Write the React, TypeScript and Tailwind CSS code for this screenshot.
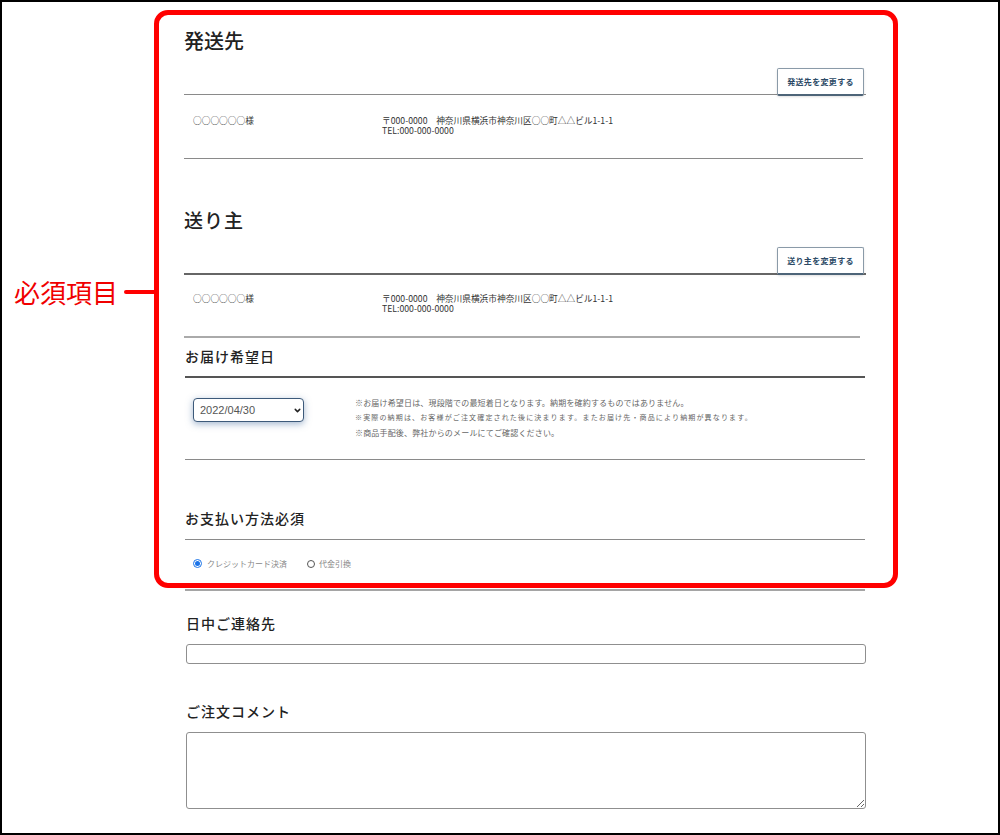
import React from 'react';
import { ChevronDown } from 'lucide-react';

const jp = 'font-["Noto_Sans_CJK_JP","Noto_Sans",sans-serif]';

function AddressRow({ spacing }: { spacing: string }) {
  return (
    <div className={`flex pl-[9px] text-[8.7px] leading-[10px] text-[#333] ${spacing}`}>
      <p className="w-[189px]">○○○○○○様</p>
      <p>
        〒000-0000　神奈川県横浜市神奈川区○○町△△ビル1-1-1
        <br />
        TEL:000-000-0000
      </p>
    </div>
  );
}

function ChangeButton({ label }: { label: string }) {
  return (
    <button className="absolute right-[2px] top-[-1px] z-10 block w-[87px] h-[28px] bg-white border border-[#8a9aa8] border-b-2 border-b-[#4d6478] rounded-[2px] text-[8px] font-bold tracking-[0.04em] text-[#2c4a66] shadow-sm">
      {label}
    </button>
  );
}

export default function App() {
  return (
    <div className={`relative h-[835px] w-[1000px] overflow-hidden bg-white border-2 border-black ${jp}`}>
      {/* Order form */}
      <div className="ml-[182px] w-[682px]">
        {/* 発送先 */}
        <section>
          <h2 className="pt-[25px] h-[67px] text-[20px] leading-[28px] font-medium text-[#222]">発送先</h2>
          <div className="relative h-[26px] border-b border-[#8a8a8a]">
            <ChangeButton label="発送先を変更する" />
          </div>
          <div className="border-b border-[#8a8a8a] w-[679px]">
            <AddressRow spacing="h-[63px] pt-[21px]" />
          </div>
        </section>

        {/* 送り主 */}
        <section>
          <h2 className="pt-[47px] h-[89px] text-[19px] leading-[28px] font-medium tracking-[0.05em] text-[#222]">送り主</h2>
          <div className="relative h-[27px] border-b-2 border-[#666]">
            <ChangeButton label="送り主を変更する" />
          </div>
          <div className="border-b-2 border-[#aaa] w-[676px]">
            <AddressRow spacing="h-[61px] pt-[19px]" />
          </div>
        </section>

        {/* お届け希望日 */}
        <section className="ml-[1px] w-[680px]">
          <h3 className="h-[40px] pt-[7px] text-[14px] leading-[22px] font-medium tracking-[1px] text-[#222] border-b-2 border-[#555]">
            お届け希望日
          </h3>
          <div className="flex h-[82px] border-b border-[#8a8a8a]">
            <div className="w-[170px] pl-[8px] pt-[20px]">
              <div className="relative w-[111px]">
                <select
                  defaultValue="2022/04/30"
                  className="block w-full h-[24px] pl-[6px] appearance-none bg-white border border-[#3d5a7a] rounded-[4px] text-[11px] text-[#555] font-['Liberation_Sans',sans-serif] shadow-[0_2px_7px_rgba(70,110,160,0.5)]"
                >
                  <option>2022/04/30</option>
                </select>
                <ChevronDown className="absolute right-[2px] top-[8px] w-[9px] h-[9px] text-[#222]" strokeWidth={4} />
              </div>
            </div>
            <div className="pt-[17px] text-[#666]">
              <p className="h-[15px] text-[8px] leading-[15px] tracking-[0.17px] whitespace-nowrap">※お届け希望日は、現段階での最短着日となります。納期を確約するものではありません。</p>
              <p className="h-[15px] text-[7px] leading-[15px] tracking-[1.15px] whitespace-nowrap">※実際の納期は、お客様がご注文確定された後に決まります。またお届け先・商品により納期が異なります。</p>
              <p className="h-[15px] text-[8px] leading-[15px] tracking-[0.17px] whitespace-nowrap">※商品手配後、弊社からのメールにてご確認ください。</p>
            </div>
          </div>
        </section>

        {/* お支払い方法 */}
        <section className="ml-[1px] w-[680px]">
          <h3 className="h-[80px] pt-[47px] text-[14px] leading-[22px] font-medium tracking-[1px] text-[#222] border-b border-[#8a8a8a]">
            お支払い方法必須
          </h3>
          <div className="flex items-center h-[51px] pb-[2px] pl-[8px] text-[8px] text-[#888] border-b-2 border-[#a5a5a5]">
            <label className="flex items-center gap-[5px]">
              <span className="w-[9px] h-[9px] rounded-full border border-[#1a73e8] flex items-center justify-center">
                <span className="w-[5px] h-[5px] rounded-full bg-[#1a73e8]" />
              </span>
              クレジットカード決済
            </label>
            <label className="flex items-center gap-[4px] ml-[20px]">
              <span className="w-[8px] h-[8px] rounded-full border border-[#555]" />
              代金引換
            </label>
          </div>
        </section>

        {/* 日中ご連絡先 */}
        <section className="ml-[2px] w-[680px]">
          <h3 className="h-[53px] pt-[21px] text-[14px] leading-[22px] font-medium tracking-[1px] text-[#222]">日中ご連絡先</h3>
          <input className="block w-full h-[20px] bg-white border border-[#8f8f8f] rounded-[3px]" />
        </section>

        {/* ご注文コメント */}
        <section className="ml-[2px] w-[680px]">
          <h3 className="h-[68px] pt-[36px] text-[14px] leading-[22px] font-medium tracking-[1px] text-[#222]">ご注文コメント</h3>
          <textarea className="block w-full h-[77px] bg-white border border-[#8f8f8f] rounded-[3px]" />
        </section>
      </div>

      {/* Red annotation */}
      <div className="absolute left-[152px] top-[8px] w-[744px] h-[578px] border-[5px] border-[#ff0000] rounded-[14px] pointer-events-none" />
      <div className="absolute left-[12px] top-[272px] flex items-center">
        <span className="w-[104px] text-[26px] leading-[36px] text-[#f00000] whitespace-nowrap">必須項目</span>
        <span className="ml-[6px] w-[32px] h-[4px] rounded-l-full bg-[#ff0000]" />
      </div>
    </div>
  );
}
